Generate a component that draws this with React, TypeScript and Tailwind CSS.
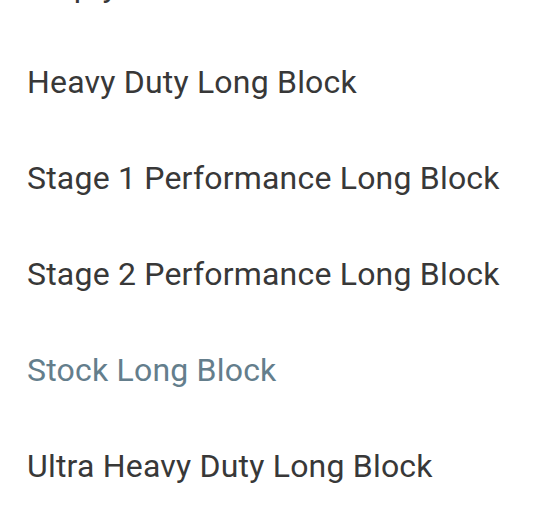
import React from "react";

const items = [
  "Empty",
  "Heavy Duty Long Block",
  "Stage 1 Performance Long Block",
  "Stage 2 Performance Long Block",
  "Stock Long Block",
  "Ultra Heavy Duty Long Block",
];

const selected = "Stock Long Block";

const App: React.FC = () => {
  return (
    <div className="w-[548px] h-[508px] overflow-hidden bg-white font-['Roboto',sans-serif]">
      <ul className="-mt-[62px] flex flex-col">
        {items.map((item) => (
          <li
            key={item}
            className={`h-[96px] flex items-center pl-[27px] text-[32px] tracking-[0.2px] leading-none whitespace-nowrap ${
              item === selected ? "text-[#647e8c]" : "text-[#383838]"
            }`}
          >
            {item}
          </li>
        ))}
      </ul>
    </div>
  );
};

export default App;
